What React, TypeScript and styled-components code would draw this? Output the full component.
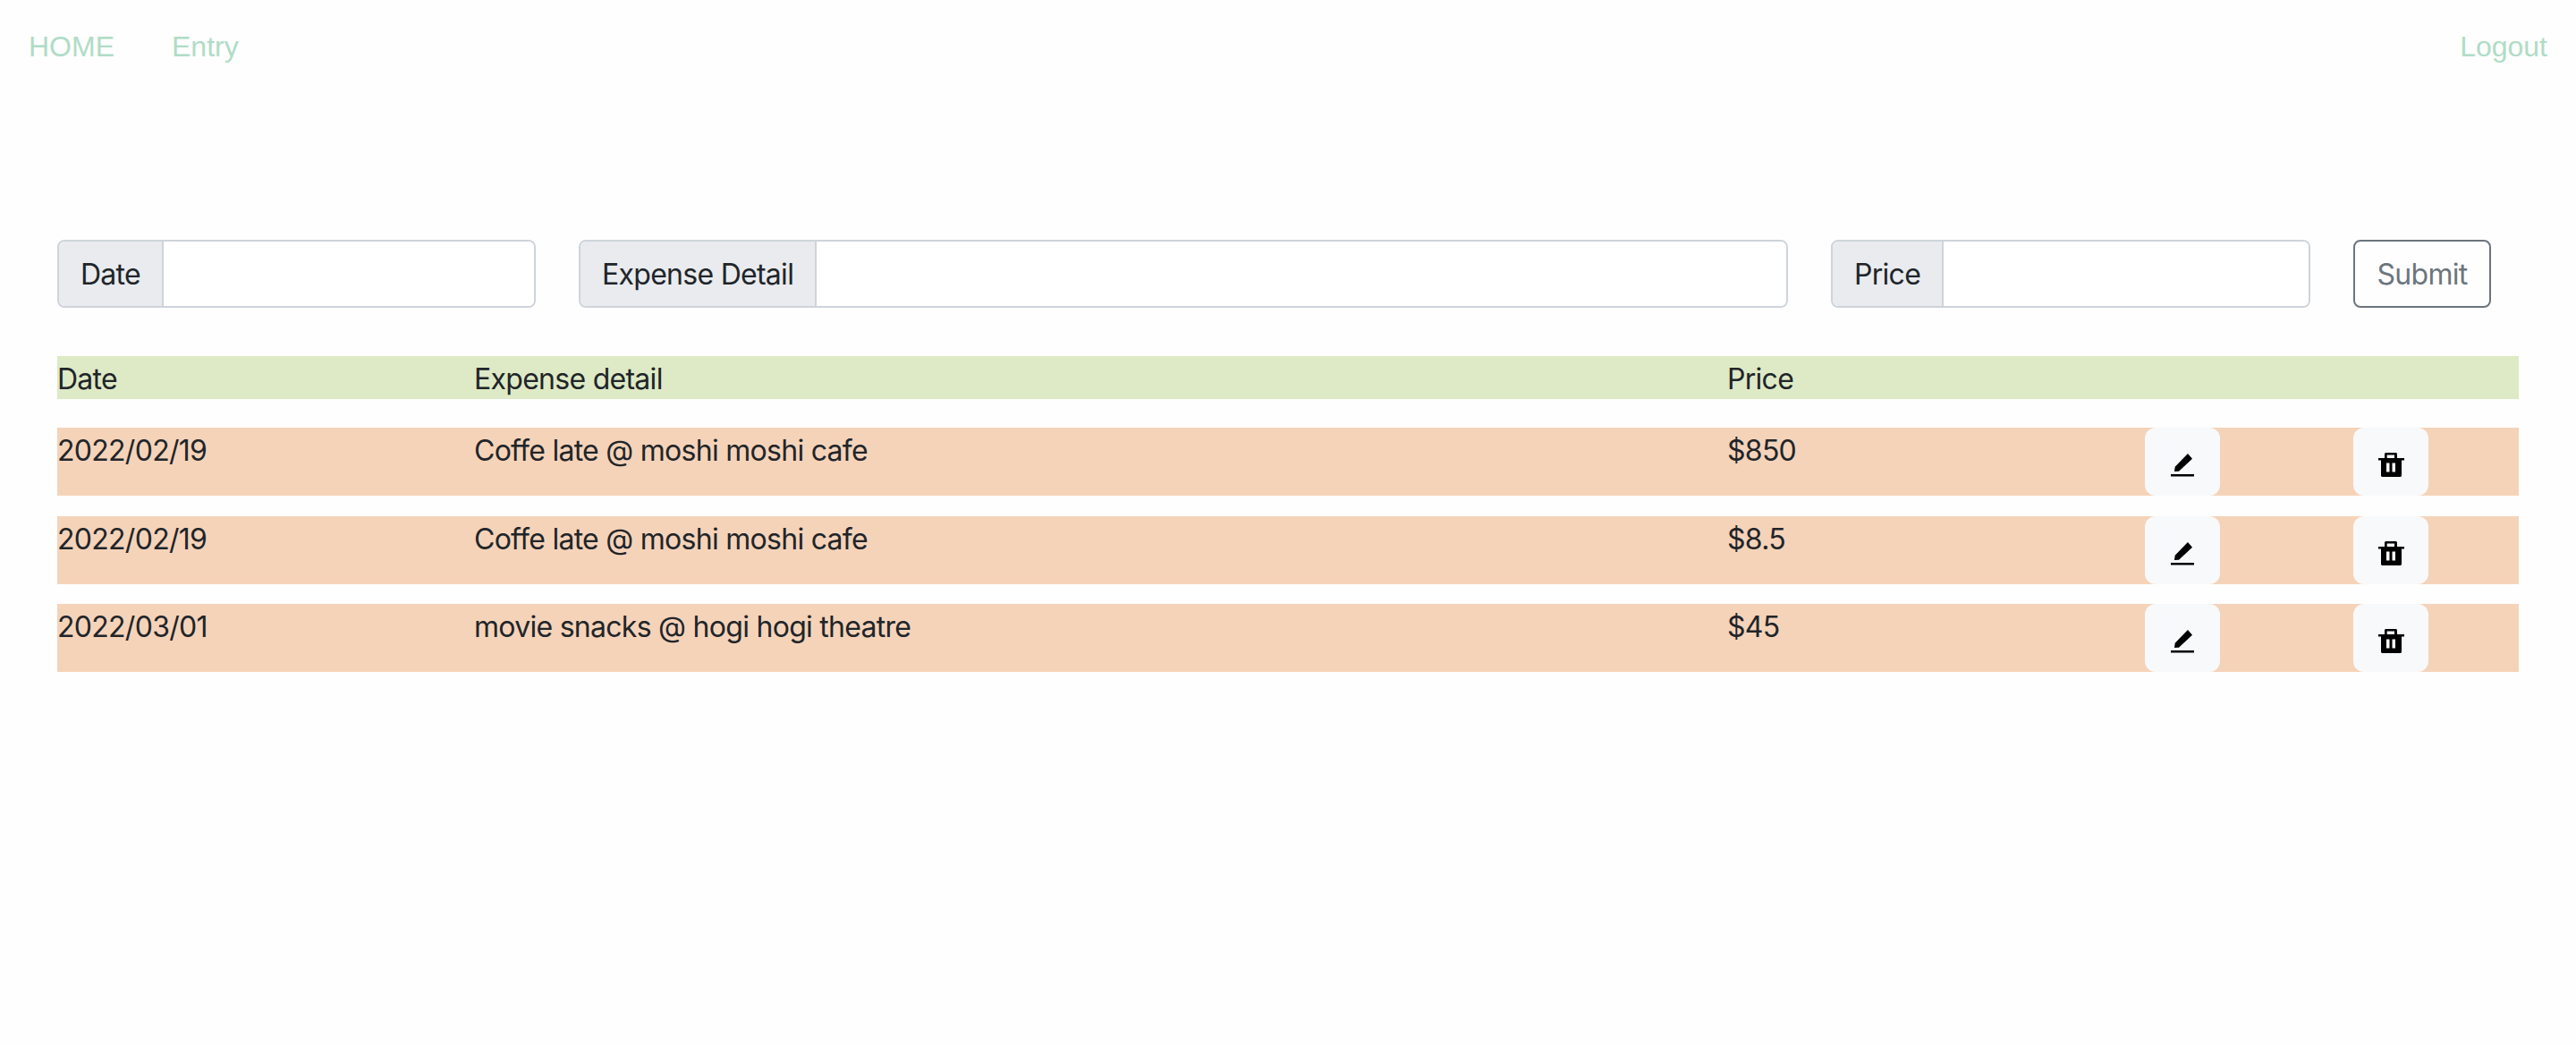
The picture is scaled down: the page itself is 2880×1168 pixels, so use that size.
import { createGlobalStyle } from 'styled-components';
import styled from 'styled-components';

type Expense = {
  id: number;
  date: string;
  detail: string;
  price: string;
};

const expenses: Expense[] = [
  { id: 1, date: '2022/02/19', detail: 'Coffe late @ moshi moshi cafe', price: '$850' },
  { id: 2, date: '2022/02/19', detail: 'Coffe late @ moshi moshi cafe', price: '$8.5' },
  { id: 3, date: '2022/03/01', detail: 'movie snacks @ hogi hogi theatre', price: '$45' },
];

const EditIcon = () => (
  <svg width="26" height="28" viewBox="0 0 26 28" fill="currentColor">
    <path d="M19 2 L24 7.7 L9 21.7 L4 22 L4.7 16.7 Z" />
    <rect x="0" y="25" width="26" height="2.5" />
  </svg>
);

const TrashIcon = () => (
  <svg width="29" height="28" viewBox="0 0 29 28" fill="currentColor">
    <path
      fillRule="evenodd"
      d="M8 1 H20 L21 2 V7 H29 V9.5 H26 V27 L25 28 H4 L3 27 V9.5 H0 V7 H7 V2 Z M9.7 3.5 V7 H18 V3.5 Z M9 12.5 V22.5 H12.5 V12.5 Z M15.5 12.5 V22.5 H19 V12.5 Z"
    />
  </svg>
);

const App = () => {
  return (
    <>
      <GlobalStyle />
      <Nav>
        <NavLinks>
          <NavLink href="#">HOME</NavLink>
          <NavLink href="#">Entry</NavLink>
        </NavLinks>
        <NavLink href="#">Logout</NavLink>
      </Nav>
      <Main>
        <EntryForm>
          <InputGroup $width={535}>
            <Addon>Date</Addon>
            <Field />
          </InputGroup>
          <InputGroup $width={1352}>
            <Addon>Expense Detail</Addon>
            <Field />
          </InputGroup>
          <InputGroup $width={536}>
            <Addon>Price</Addon>
            <Field />
          </InputGroup>
          <SubmitButton type="button">Submit</SubmitButton>
        </EntryForm>
        <HeaderRow>
          <RowText>Date</RowText>
          <RowText>Expense detail</RowText>
          <RowText>Price</RowText>
        </HeaderRow>
        <Rows>
          {expenses.map(({ id, date, detail, price }) => (
            <ExpenseRow key={id}>
              <RowText>{date}</RowText>
              <RowText>{detail}</RowText>
              <RowText>{price}</RowText>
              <IconCell>
                <IconButton type="button" aria-label="Edit">
                  <EditIcon />
                </IconButton>
              </IconCell>
              <IconCell>
                <IconButton type="button" aria-label="Delete">
                  <TrashIcon />
                </IconButton>
              </IconCell>
            </ExpenseRow>
          ))}
        </Rows>
      </Main>
    </>
  );
};
export default App;

const GlobalStyle = createGlobalStyle`
  * {
    box-sizing: border-box;
  }

  body {
    margin: 0;
    background: #fefefe;
    color: #212529;
    font-family: Inter, 'Liberation Sans', sans-serif;
    font-size: 32px;
    letter-spacing: -0.72px;
    line-height: 48px;
  }
`;

const Nav = styled.nav`
  display: flex;
  justify-content: space-between;
  padding: 28px 32px 0;
`;

const NavLinks = styled.div`
  display: flex;
  gap: 64px;
`;

const NavLink = styled.a`
  color: #b0dcc6;
  font-family: 'Liberation Sans', Arial, sans-serif;
  letter-spacing: 0;
  text-decoration: none;
`;

const Main = styled.main`
  padding: 192px 64px 0;
`;

const EntryForm = styled.form`
  display: flex;
  gap: 48px;
  margin-bottom: 54px;
`;

const InputGroup = styled.div<{ $width: number }>`
  display: flex;
  width: ${({ $width }) => $width}px;
  height: 76px;
  border: 2px solid #ced4da;
  border-radius: 8px;
  overflow: hidden;
`;

const Addon = styled.span`
  display: flex;
  align-items: center;
  padding: 2px 24px 0;
  background: #e9ebef;
  border-right: 2px solid #ced4da;
  white-space: nowrap;
`;

const Field = styled.input`
  flex: 1;
  min-width: 0;
  border: 0;
  outline: 0;
  background: #fff;
`;

const SubmitButton = styled.button`
  width: 154px;
  height: 76px;
  padding: 2px 0 0;
  border: 2px solid #6c757d;
  border-radius: 8px;
  background: transparent;
  color: #6c757d;
  font: inherit;
  letter-spacing: inherit;
`;

const columns = 'grid-template-columns: 466px 1401px 467px 233px 1fr;';

const HeaderRow = styled.div`
  display: grid;
  ${columns}
  height: 48px;
  background: #deeac5;
`;

const Rows = styled.div`
  display: flex;
  flex-direction: column;
  gap: 22.5px;
  margin-top: 32px;
`;

const ExpenseRow = styled.div`
  display: grid;
  ${columns}
  height: 76px;
  background: #f5d3b9;
`;

const RowText = styled.span`
  padding-top: 2px;
`;

const IconCell = styled.div`
  display: flex;
`;

const IconButton = styled.button`
  display: flex;
  align-items: center;
  justify-content: center;
  width: 84px;
  height: 76px;
  padding: 6px 0 0;
  border: 0;
  border-radius: 12px;
  background: #f8f9fa;
  color: #000;
`;
